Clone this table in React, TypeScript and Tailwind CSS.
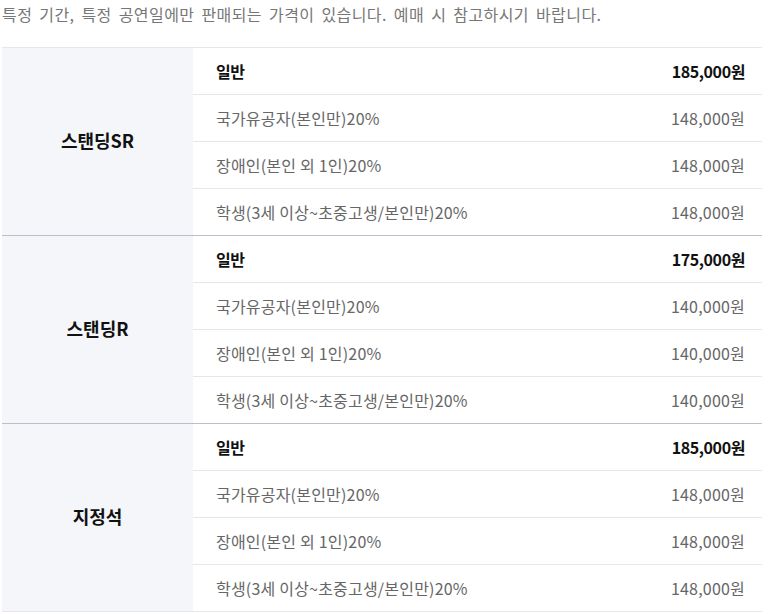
import React from "react";

type Row = { name: string; price: string; bold?: boolean };
type Group = { label: string; rows: Row[] };

const mk = (g: string, s: string): Row[] => [
  { name: "일반", price: g, bold: true },
  { name: "국가유공자(본인만)20%", price: s },
  { name: "장애인(본인 외 1인)20%", price: s },
  { name: "학생(3세 이상~초중고생/본인만)20%", price: s },
];

const groups: Group[] = [
  { label: "스탠딩SR", rows: mk("185,000원", "148,000원") },
  { label: "스탠딩R", rows: mk("175,000원", "140,000원") },
  { label: "지정석", rows: mk("185,000원", "148,000원") },
];

export default function App() {
  return (
    <div
      className="bg-white w-[768px] h-[614px] overflow-hidden pl-[2px]"
      style={{ fontFamily: '"Noto Sans CJK KR", "Noto Sans", sans-serif' }}
    >
      <p className="text-[16px] leading-[28px] text-[#777777] mb-[19px] tracking-[0.42px] [word-spacing:3px]">
        특정 기간, 특정 공연일에만 판매되는 가격이 있습니다. 예매 시 참고하시기 바랍니다.
      </p>
      <div className="w-[760px] border-b border-[#e3e7ee]">
        {groups.map((g, gi) => (
          <div
            key={g.label}
            className={`flex border-t ${gi === 0 ? "border-[#e3e7ee]" : "border-[#b9c0cb]"}`}
          >
            <div className="w-[191px] bg-[#f4f6f9] flex items-center justify-center pb-[2px] text-[18px] font-bold text-[#111111]">
              {g.label}
            </div>
            <div className="flex-1 flex flex-col">
              {g.rows.map((r, ri) => (
                <div
                  key={ri}
                  className={`flex items-center justify-between pl-[23px] pr-[17px] pb-[1px] text-[16px] ${
                    ri > 0 ? "border-t border-[#e3e7ee] h-[47px]" : "h-[46px]"
                  } ${r.bold ? "font-bold text-[#111111] tracking-[-0.4px]" : "text-[#666666] tracking-[0.2px]"}`}
                >
                  <span>{r.name}</span>
                  <span>{r.price}</span>
                </div>
              ))}
            </div>
          </div>
        ))}
      </div>
    </div>
  );
}
